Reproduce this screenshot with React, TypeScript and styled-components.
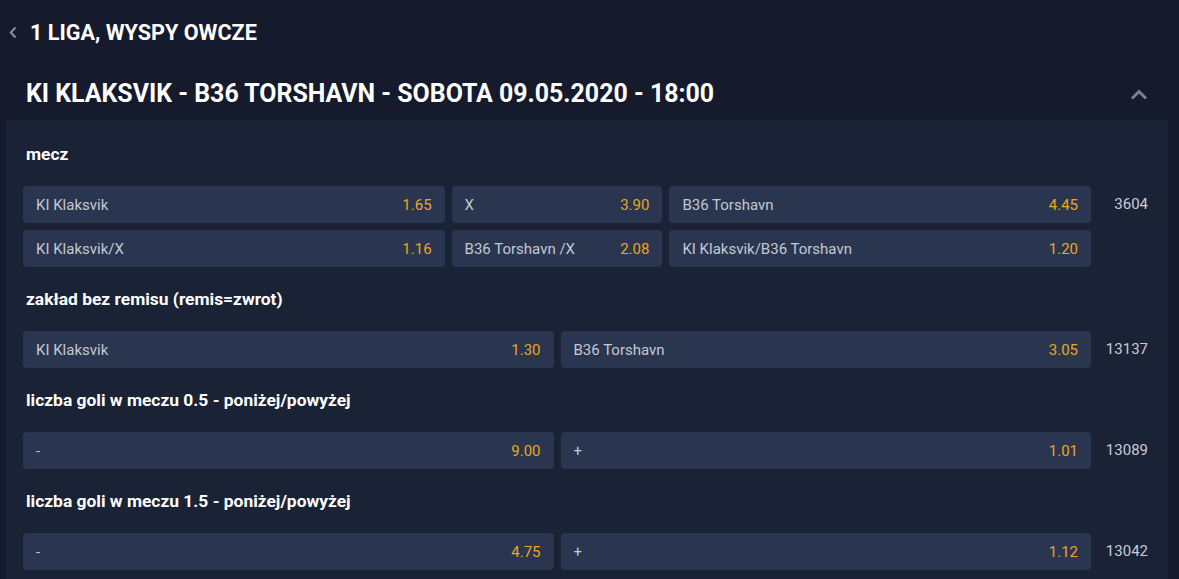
import styled, { createGlobalStyle } from 'styled-components';

type Pick = {
  label: string;
  odds: string;
  /** relative width inside the row */
  grow?: number;
};

type Market = {
  title: string;
  count: string;
  rows: Pick[][];
};

const MARKETS: Market[] = [
  {
    title: 'mecz',
    count: '3604',
    rows: [
      [
        { label: 'KI Klaksvik', odds: '1.65', grow: 2 },
        { label: 'X', odds: '3.90', grow: 1 },
        { label: 'B36 Torshavn', odds: '4.45', grow: 2 },
      ],
      [
        { label: 'KI Klaksvik/X', odds: '1.16', grow: 2 },
        { label: 'B36 Torshavn /X', odds: '2.08', grow: 1 },
        { label: 'KI Klaksvik/B36 Torshavn', odds: '1.20', grow: 2 },
      ],
    ],
  },
  {
    title: 'zakład bez remisu (remis=zwrot)',
    count: '13137',
    rows: [
      [
        { label: 'KI Klaksvik', odds: '1.30' },
        { label: 'B36 Torshavn', odds: '3.05' },
      ],
    ],
  },
  {
    title: 'liczba goli w meczu 0.5 - poniżej/powyżej',
    count: '13089',
    rows: [
      [
        { label: '-', odds: '9.00' },
        { label: '+', odds: '1.01' },
      ],
    ],
  },
  {
    title: 'liczba goli w meczu 1.5 - poniżej/powyżej',
    count: '13042',
    rows: [
      [
        { label: '-', odds: '4.75' },
        { label: '+', odds: '1.12' },
      ],
    ],
  },
];

const GlobalStyle = createGlobalStyle`
  html, body {
    margin: 0;
    padding: 0;
    background: #151b2c;
    font-family: Roboto, "Noto Sans", "Liberation Sans", sans-serif;
    overflow: hidden;
  }
`;

const Page = styled.div`
  width: 1179px;
  height: 579px;
  box-sizing: border-box;
  padding: 0 11px 0 6px;
  background: #151b2c;
  overflow: hidden;
`;

const Breadcrumb = styled.div`
  display: flex;
  align-items: center;
  gap: 13px;
  height: 64px;
  padding-left: 3px;
  color: #ffffff;
  font-size: 21.6px;
  font-weight: 700;

  svg {
    flex: none;
  }
`;

const EventHeader = styled.div`
  display: flex;
  align-items: center;
  justify-content: space-between;
  height: 56px;
  padding: 4px 20px 0 20px;
  box-sizing: border-box;

  h1 {
    margin: 0;
    color: #ffffff;
    font-size: 24.9px;
    font-weight: 700;
    line-height: 1;
  }
`;

const Panel = styled.div`
  background: #1a2236;
  padding: 2px 0 20px 17px;
`;

const MarketTitle = styled.div`
  display: flex;
  align-items: center;
  height: 64px;
  padding-left: 3px;
  color: #ffffff;
  font-size: 17.4px;
  font-weight: 700;
`;

const MarketBody = styled.div`
  display: flex;
  align-items: flex-start;
`;

const Rows = styled.div`
  flex: 1;
  display: flex;
  flex-direction: column;
  gap: 7px;
`;

const Row = styled.div<{ $columns: string }>`
  display: grid;
  grid-template-columns: ${({ $columns }) => $columns};
  gap: 7px;
`;

const OddButton = styled.div`
  min-width: 0;
  height: 37px;
  display: flex;
  align-items: center;
  justify-content: space-between;
  padding: 0 13px;
  border-radius: 4px;
  background: #2a3650;
  font-size: 15px;

  .label {
    color: #c3c8d3;
    white-space: nowrap;
  }

  .odds {
    color: #eaa522;
  }
`;

const Count = styled.div`
  width: 77px;
  height: 37px;
  line-height: 37px;
  padding-right: 20px;
  box-sizing: border-box;
  text-align: right;
  color: #c8ccd6;
  font-size: 15px;
`;

function ChevronLeft() {
  return (
    <svg width="8" height="13" viewBox="0 0 8 13">
      <polyline
        points="6.5,1.5 1.8,6.5 6.5,11.5"
        fill="none"
        stroke="#8a90a1"
        strokeWidth="2"
      />
    </svg>
  );
}

function ChevronUp() {
  return (
    <svg width="18" height="11" viewBox="0 0 18 11">
      <polyline
        points="2,9.5 9,2.5 16,9.5"
        fill="none"
        stroke="#7b8297"
        strokeWidth="2.8"
      />
    </svg>
  );
}

const columnsFor = (row: Pick[]) =>
  row.map((pick) => `minmax(0, ${pick.grow ?? 1}fr)`).join(' ');

function App() {
  return (
    <Page>
      <GlobalStyle />
      <Breadcrumb>
        <ChevronLeft />
        <span>1 LIGA, WYSPY OWCZE</span>
      </Breadcrumb>
      <EventHeader>
        <h1>KI KLAKSVIK - B36 TORSHAVN - SOBOTA 09.05.2020 - 18:00</h1>
        <ChevronUp />
      </EventHeader>
      <Panel>
        {MARKETS.map((market) => (
          <div key={market.title}>
            <MarketTitle>{market.title}</MarketTitle>
            <MarketBody>
              <Rows>
                {market.rows.map((row, i) => (
                  <Row key={i} $columns={columnsFor(row)}>
                    {row.map((pick) => (
                      <OddButton key={pick.label}>
                        <span className="label">{pick.label}</span>
                        <span className="odds">{pick.odds}</span>
                      </OddButton>
                    ))}
                  </Row>
                ))}
              </Rows>
              <Count>{market.count}</Count>
            </MarketBody>
          </div>
        ))}
      </Panel>
    </Page>
  );
}

export default App;
